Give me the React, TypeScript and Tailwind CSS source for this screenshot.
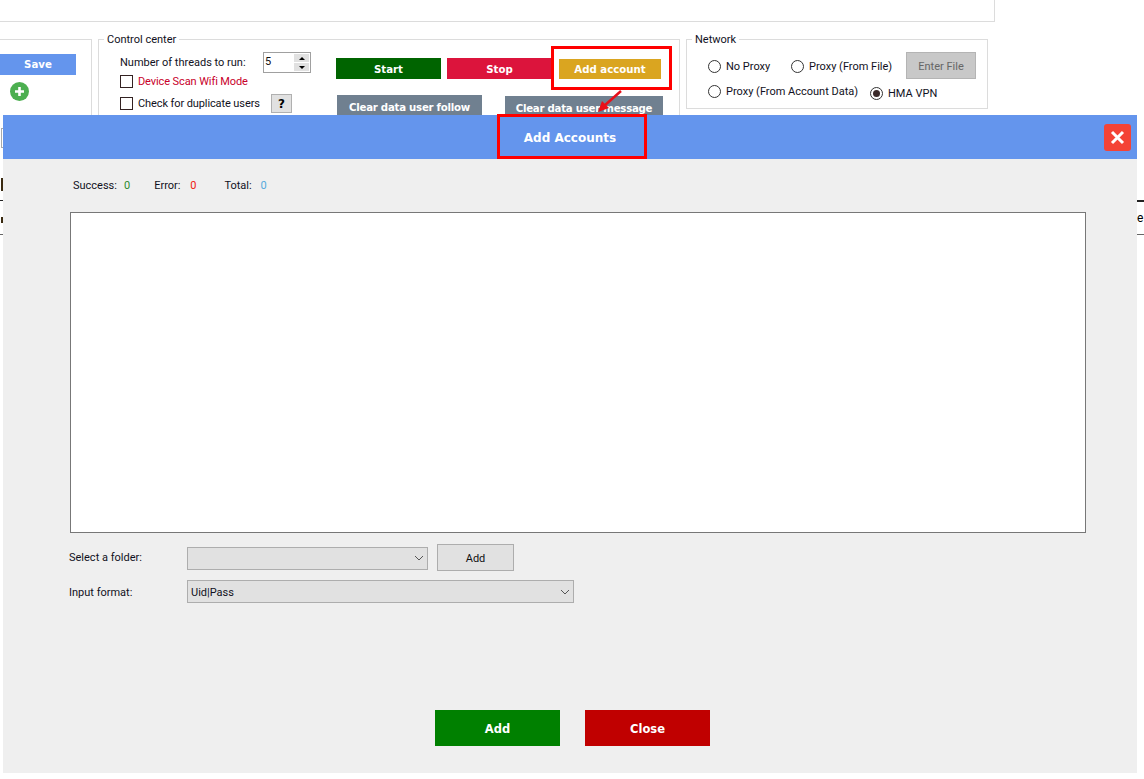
import React from "react";

const ui = { fontFamily: 'Roboto, "Noto Sans", sans-serif' };
const bold = { fontFamily: '"DejaVu Sans", sans-serif' };

function Radio({ label, checked, className = "" }: { label: string; checked?: boolean; className?: string }) {
  return (
    <div className={`flex items-center gap-[5px] ${className}`}>
      <span className="w-[13px] h-[13px] rounded-full border border-[#333] flex items-center justify-center shrink-0 bg-white">
        {checked && <span className="w-[7px] h-[7px] rounded-full bg-[#3a2a2a]" />}
      </span>
      <span className="text-[11px] leading-none text-[#111122] whitespace-nowrap">{label}</span>
    </div>
  );
}

function Chevron({ className = "" }: { className?: string }) {
  return (
    <svg width="10" height="6" viewBox="0 0 10 6" className={className}>
      <path d="M1 1l4 4 4-4" fill="none" stroke="#555" strokeWidth="1" />
    </svg>
  );
}

function Check({ label, red }: { label: string; red?: boolean }) {
  return (
    <div className="flex items-center gap-[5px]">
      <span className="w-[13px] h-[13px] border border-[#332222] bg-white shrink-0" />
      <span className={`text-[11px] leading-none whitespace-nowrap tracking-[-0.1px] ${red ? "text-[#c8002a]" : "text-[#111122]"}`}>{label}</span>
    </div>
  );
}

export default function App() {
  return (
    <div className="relative w-[1144px] h-[779px] overflow-hidden bg-white" style={ui}>
      {/* Window behind the dialog */}
      <div className="w-[995px] h-[22px] border-r border-b border-[#dcdcdc]" />
      <div className="flex items-start mt-[17px]">
        <div className="w-[92px] h-[120px] border-r border-t border-[#dcdcdc] shrink-0 pt-[14px]">
          <div className="w-[76px] h-[21px] bg-[#6495ed] text-white text-[10.2px] font-bold flex items-center justify-center pt-px" style={bold}>Save</div>
          <div className="ml-[10px] mt-[7px] w-[19px] h-[19px] rounded-full bg-[#4caf50] flex items-center justify-center">
            <svg width="11" height="11" viewBox="0 0 11 11"><path d="M5.5 1v9M1 5.5h9" stroke="#fff" strokeWidth="2.6" /></svg>
          </div>
        </div>
        <div className="relative ml-[6px] w-[582px] h-[120px] border border-[#dcdcdc] shrink-0 flex">
          <span className="absolute left-[5px] -top-[7px] bg-white px-[3px] text-[11px] leading-[14px] text-[#111122]">Control center</span>
          <div className="w-[237px] pl-[21px] pt-[11px]">
            <div className="flex items-center h-[23px]">
              <span className="text-[11px] text-[#111122] w-[143px] whitespace-nowrap pt-[2px]">Number of threads to run:</span>
              <div className="w-[48px] h-[21px] border border-[#a0a0a0] flex items-center justify-between pl-[1px] pr-[1px]">
                <span className="text-[11px] leading-none text-[#111] mb-[2px]">5</span>
                <div className="w-[15px] h-[17px] flex flex-col gap-px">
                  <div className="h-[8px] bg-[#e1e1e1] flex items-center justify-center"><span className="border-x-[3px] border-x-transparent border-b-[3px] border-b-black" /></div>
                  <div className="h-[8px] bg-[#e1e1e1] flex items-center justify-center"><span className="border-x-[3px] border-x-transparent border-t-[3px] border-t-black" /></div>
                </div>
              </div>
            </div>
            <div className="mt-px"><Check label="Device Scan Wifi Mode" red /></div>
            <div className="mt-[6px] flex items-center">
              <div className="w-[151px]"><Check label="Check for duplicate users" /></div>
              <div className="w-[21px] h-[19px] bg-[#e1e1e1] border border-[#b0b0b0] flex items-center justify-center text-[12px] font-bold text-black" style={bold}>?</div>
            </div>
          </div>
          <div className="pt-[18px] flex flex-col text-white text-[10.2px] font-bold" style={bold}>
            <div className="flex">
              <div className="w-[105px] h-[21px] bg-[#006400] flex items-center justify-center pt-[2px]">Start</div>
              <div className="ml-[6px] w-[105px] h-[21px] bg-[#dc143c] flex items-center justify-center pt-[2px]">Stop</div>
              <div className="ml-[7px] w-[102px] h-[20px] mt-[1px] bg-[#daa520] flex items-center justify-center pt-px">Add account</div>
            </div>
            <div className="flex mt-[16px] tracking-[-0.25px]">
              <div className="ml-px w-[145px] h-[30px] bg-[#708090] flex justify-center pt-[5px]">Clear data user follow</div>
              <div className="ml-[23px] mt-px w-[158px] h-[30px] bg-[#708090] flex justify-center pt-[5px]">Clear data user message</div>
            </div>
          </div>
        </div>
        <div className="relative ml-[6px] w-[302px] h-[70px] border border-[#dcdcdc] shrink-0 pl-[21px] pt-[12px]">
          <span className="absolute left-[5px] -top-[7px] bg-white px-[3px] text-[11px] leading-[14px] text-[#111122]">Network</span>
          <div className="flex items-center h-[27px]">
            <Radio label="No Proxy" className="w-[83px] mt-[2px]" />
            <Radio label="Proxy (From File)" className="w-[115px] mt-[2px]" />
            <div className="w-[70px] h-[27px] bg-[#c8c8c8] border border-[#b4b4b4] text-[#666] text-[11px] flex items-center justify-center pt-[3px]">Enter File</div>
          </div>
          <div className="flex items-start mt-[6px]">
            <Radio label="Proxy (From Account Data)" className="w-[162px]" />
            <Radio label="HMA VPN" checked className="mt-[2px]" />
          </div>
        </div>
      </div>

      {/* Fragments of the table behind the dialog */}
      <div className="absolute left-[1px] top-[128px] w-[2px] h-[20px] border-y border-l border-[#aaa]" />
      <div className="absolute left-[1px] top-[178px] w-[2px] h-[13px] border-r-2 border-[#3a2a10]" />
      <div className="absolute left-0 top-[200px] w-[3px] h-[35px] border-y border-t-[#222] border-b-[#666]" />
      <div className="absolute left-[1px] top-[217px] w-[2px] h-[6px] bg-[#3a2a10]" />
      <div className="absolute right-0 top-[200px] w-[7px] h-[35px] border-t-2 border-b border-t-[#222] border-b-[#666] text-[12px] leading-[33px] text-black overflow-hidden">e</div>

      {/* Dialog */}
      <div className="absolute left-[3px] top-[115px] w-[1134px] h-[658px] bg-[#efefef] flex flex-col">
        <div className="h-[44px] bg-[#6495ed] shrink-0 flex items-center justify-center relative">
          <span className="text-white text-[12px] font-bold pt-px" style={bold}>Add Accounts</span>
          <div className="absolute right-[6px] top-[9px] w-[27px] h-[27px] rounded-[3px] bg-[#f44336] flex items-center justify-center">
            <svg width="15" height="15" viewBox="0 0 15 15"><path d="M2 2l11 11M13 2L2 13" stroke="#fff" strokeWidth="3" /></svg>
          </div>
        </div>
        <div className="flex text-[11px] leading-none mt-[20px] ml-[70px] h-[12px] items-center text-[#111122]">
          <span className="w-[44px]">Success:</span><span className="ml-[7px] text-[#2e8b2e]">0</span>
          <span className="ml-[24px] w-[28px]">Error:</span><span className="ml-[8px] text-[#f02010]">0</span>
          <span className="ml-[28px] w-[28px]">Total:</span><span className="ml-[8px] text-[#55aadd]">0</span>
        </div>
        <div className="ml-[67px] mt-[21px] w-[1016px] h-[321px] bg-white border border-[#777]" />
        <div className="flex items-center mt-[11px] ml-[66px] h-[27px]">
          <span className="w-[118px] text-[11px] text-[#111122] pt-[2px]">Select a folder:</span>
          <div className="w-[241px] h-[23px] mt-[1px] bg-[#e1e1e1] border border-[#adadad] flex items-center justify-end pr-[3px]"><Chevron /></div>
          <div className="ml-[9px] w-[77px] h-[27px] bg-[#e1e1e1] border border-[#adadad] text-[11px] text-[#111] flex items-center justify-center pt-[3px]">Add</div>
        </div>
        <div className="flex items-center mt-[9px] ml-[66px] h-[23px]">
          <span className="w-[118px] text-[11px] text-[#111122] pt-[4px]">Input format:</span>
          <div className="w-[387px] h-[23px] bg-[#e1e1e1] border border-[#adadad] flex items-center justify-between pl-[3px] pr-[3px]">
            <span className="text-[11px] text-[#111122] pt-[3px]">Uid|Pass</span><Chevron />
          </div>
        </div>
        <div className="flex mt-[107px] ml-[432px] text-white text-[11.5px] font-bold" style={bold}>
          <div className="w-[125px] h-[36px] bg-[#008000] flex items-center justify-center pt-[3px]">Add</div>
          <div className="ml-[25px] w-[125px] h-[36px] bg-[#c00000] flex items-center justify-center pt-[3px]">Close</div>
        </div>
      </div>

      {/* Red annotations */}
      <div className="absolute left-[551px] top-[46px] w-[121px] h-[44px] border-[3px] border-[#ff0000]" />
      <div className="absolute left-[497px] top-[114px] w-[150px] h-[45px] border-[3px] border-[#ff0000]" />
      <svg className="absolute left-[595px] top-[88px]" width="30" height="28" viewBox="0 0 30 28">
        <path d="M26 3L9 18" stroke="#e8101a" strokeWidth="2.5" />
        <path d="M3 24l4-11 7 7z" fill="#e8101a" />
      </svg>
    </div>
  );
}
